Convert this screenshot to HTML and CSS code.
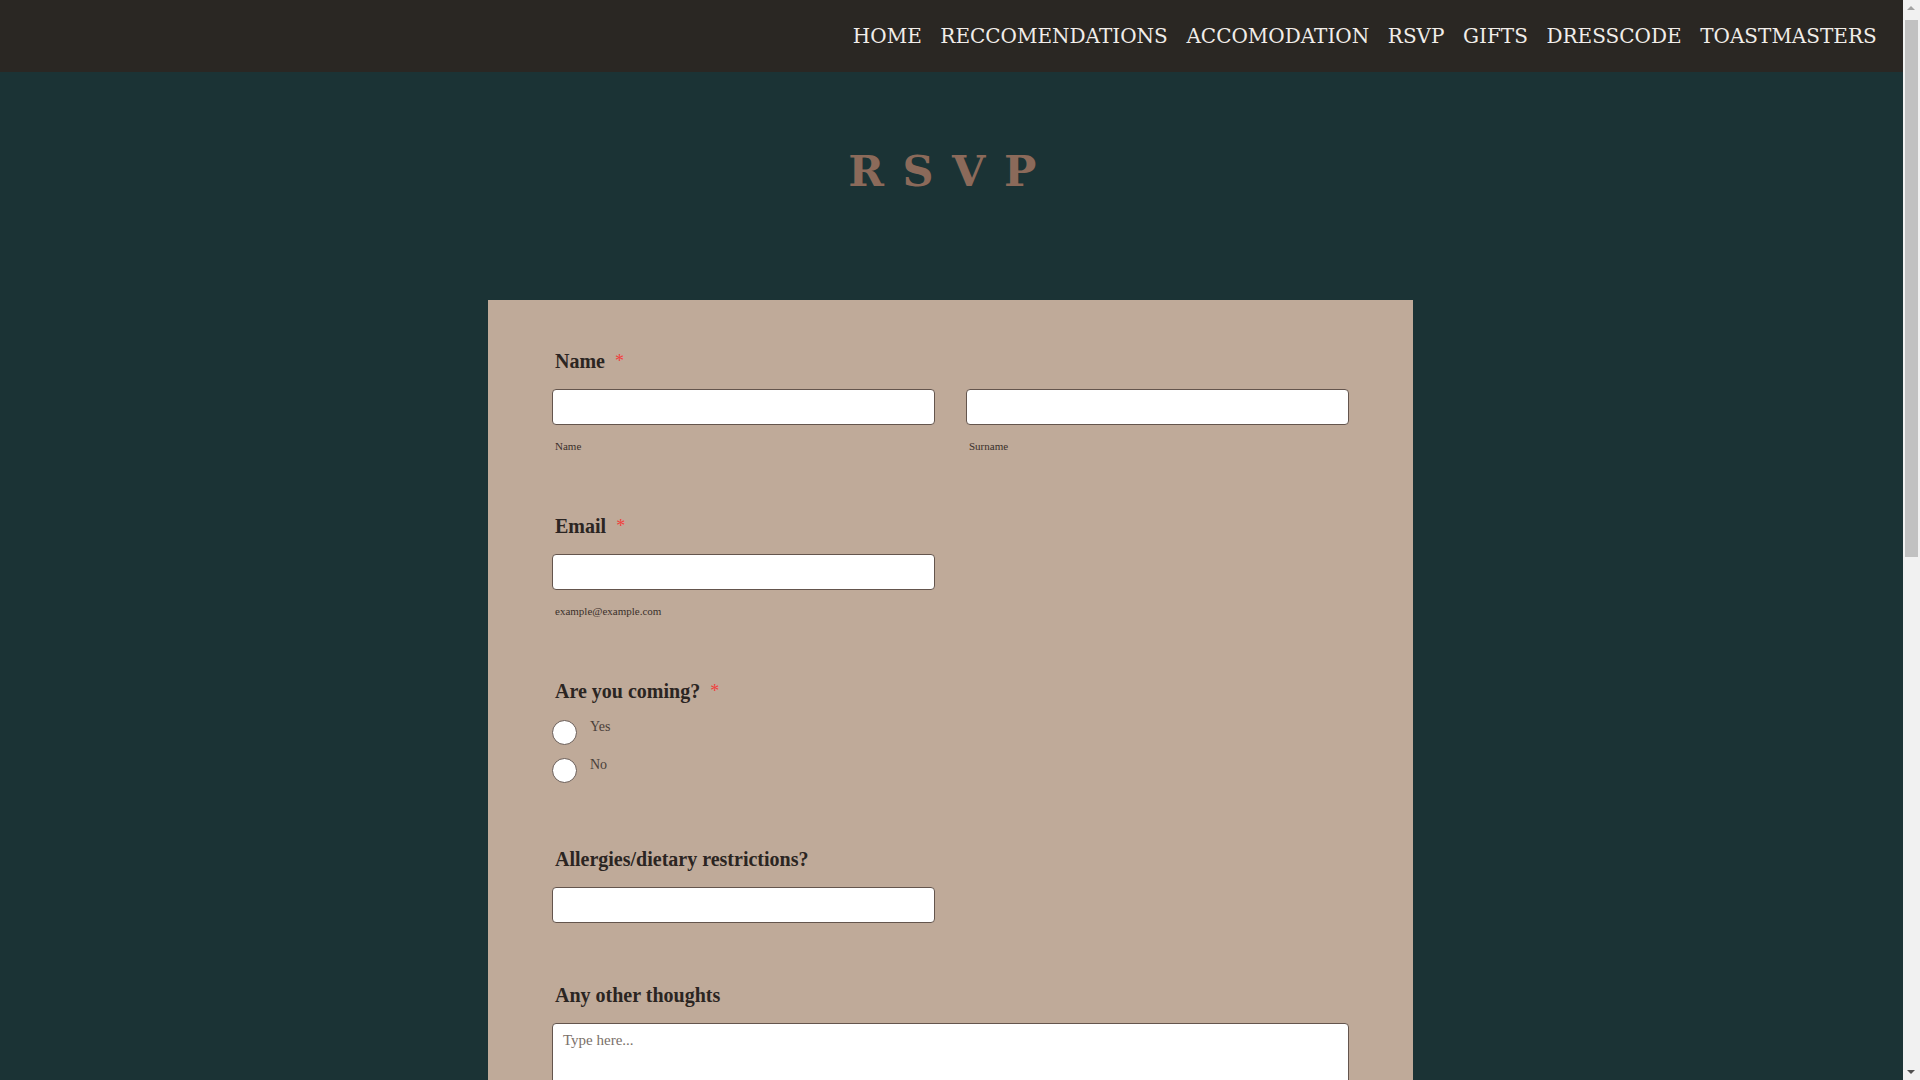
FILE: index.html
```html
<!DOCTYPE html>
<html lang="en">
<head>
<meta charset="utf-8">
<title>RSVP</title>
<link rel="stylesheet" href="styles.css">
</head>
<body>
<div class="site">
  <header class="topbar">
    <nav class="menu">
      <a class="menu-item" href="#">HOME</a>
      <a class="menu-item" href="#">RECCOMENDATIONS</a>
      <a class="menu-item" href="#">ACCOMODATION</a>
      <a class="menu-item" href="#">RSVP</a>
      <a class="menu-item" href="#">GIFTS</a>
      <a class="menu-item" href="#">DRESSCODE</a>
      <a class="menu-item" href="#">TOASTMASTERS</a>
    </nav>
  </header>
  <main class="page">
    <h1 class="page-title">RSVP</h1>
    <form class="card">
      <div class="field">
        <div class="field-label">Name<span class="req">*</span></div>
        <div class="two-col">
          <div class="sub-field">
            <input class="text-input" type="text">
            <div class="sub-label">Name</div>
          </div>
          <div class="sub-field">
            <input class="text-input" type="text">
            <div class="sub-label">Surname</div>
          </div>
        </div>
      </div>
      <div class="field">
        <div class="field-label">Email<span class="req">*</span></div>
        <div class="half">
          <input class="text-input" type="email">
          <div class="sub-label">example@example.com</div>
        </div>
      </div>
      <div class="field field-radios">
        <div class="field-label">Are you coming?<span class="req">*</span></div>
        <div class="radio-group">
          <label class="radio-row"><span class="radio-circle"></span><span class="radio-text">Yes</span></label>
          <label class="radio-row"><span class="radio-circle"></span><span class="radio-text">No</span></label>
        </div>
      </div>
      <div class="field">
        <div class="field-label">Allergies/dietary restrictions?</div>
        <div class="half">
          <input class="text-input" type="text">
        </div>
      </div>
      <div class="field">
        <div class="field-label">Any other thoughts</div>
        <textarea class="text-area" placeholder="Type here..."></textarea>
      </div>
      <div class="actions">
        <button class="submit" type="button">Submit</button>
      </div>
    </form>
  </main>
</div>
<div class="scrollbar" aria-hidden="true">
  <div class="sb-arrow sb-up"></div>
  <div class="sb-track"><div class="sb-thumb"></div></div>
  <div class="sb-arrow sb-down"></div>
</div>
</body>
</html>
```
FILE: styles.css
```css
html, body {
  margin: 0;
  padding: 0;
}
body {
  background: #1b3335;
  font-family: "Liberation Serif", "Times New Roman", serif;
  color: #2b2522;
}
.site {
  margin-right: 17px;
}
.topbar {
  height: 72px;
  background: #2a2723;
  display: flex;
  align-items: center;
  justify-content: flex-end;
  padding-right: 17px;
}
.menu {
  display: flex;
  align-items: center;
}
.menu-item {
  font-family: "DejaVu Serif", serif;
  font-size: 20px;
  color: #f1ede9;
  text-decoration: none;
  padding: 0 9.3px;
}
.page {
  min-height: 1960px;
  padding-top: 75px;
  padding-bottom: 60px;
  box-sizing: border-box;
}
.page-title {
  margin: 0;
  text-align: center;
  font-family: "DejaVu Serif", serif;
  font-weight: bold;
  font-size: 43px;
  line-height: 48px;
  letter-spacing: 18.5px;
  color: #8b6a5a;
}
.card {
  width: 925px;
  margin: 105px auto 0;
  position: relative;
  left: -1px;
  background: #bfaa99;
  padding: 49px 64px 60px;
  box-sizing: border-box;
}
.field {
  margin-bottom: 60px;
}
.field-radios {
  margin-bottom: 64px;
}
.field-label {
  font-size: 20px;
  line-height: 24px;
  font-weight: bold;
  padding-left: 3px;
  margin-bottom: 16px;
  color: #2b2522;
}
.req {
  color: #f2403e;
  font-weight: normal;
  font-size: 18px;
  margin-left: 10px;
  vertical-align: top;
}
.two-col {
  display: grid;
  grid-template-columns: 1fr 1fr;
  column-gap: 31px;
}
.half {
  width: calc((100% - 31px) / 2);
}
.text-input {
  display: block;
  width: 100%;
  height: 36px;
  box-sizing: border-box;
  background: #fff;
  border: 1px solid #64554d;
  border-radius: 4px;
  padding: 0 10px;
  font-family: "Liberation Serif", serif;
  font-size: 15px;
  margin: 0;
}
.sub-label {
  margin-top: 13px;
  padding-left: 3px;
  font-size: 11px;
  line-height: 16px;
  color: #3a302b;
}
.radio-group {
  display: flex;
  flex-direction: column;
  gap: 13px;
  padding-top: 1px;
}
.radio-row {
  display: flex;
  align-items: flex-start;
  gap: 13px;
}
.radio-circle {
  width: 25px;
  height: 25px;
  box-sizing: border-box;
  border-radius: 50%;
  background: #fff;
  border: 1px solid #6a5d57;
  flex: none;
}
.radio-text {
  font-size: 14px;
  line-height: 16px;
  color: #4a3f3a;
  margin-top: -1px;
}
.text-area {
  display: block;
  width: 100%;
  height: 200px;
  box-sizing: border-box;
  background: #fff;
  border: 1px solid #64554d;
  border-radius: 4px;
  padding: 7px 10px;
  font-family: "Liberation Serif", serif;
  font-size: 15px;
  line-height: 18px;
  resize: vertical;
  margin: 0;
}
.text-area::placeholder {
  color: #7a7069;
}
.actions {
  display: flex;
  justify-content: center;
}
.submit {
  font-family: "DejaVu Serif", serif;
  font-size: 18px;
  color: #f1ede9;
  background: #2a2723;
  border: none;
  border-radius: 4px;
  padding: 12px 40px;
}
.scrollbar {
  position: fixed;
  top: 0;
  right: 0;
  bottom: 0;
  width: 17px;
  background: #f1f1f1;
  display: flex;
  flex-direction: column;
}
.sb-arrow {
  height: 17px;
  flex: none;
  position: relative;
}
.sb-up::after,
.sb-down::after {
  content: "";
  position: absolute;
  left: 4px;
  border-left: 4px solid transparent;
  border-right: 4px solid transparent;
}
.sb-up::after {
  top: 6px;
  border-bottom: 4px solid #a3a3a3;
}
.sb-down::after {
  top: 7px;
  border-top: 4px solid #505050;
}
.sb-track {
  flex: 1;
  padding: 3px 2px 0;
}
.sb-thumb {
  height: 537px;
  background: #c1c1c1;
}
```
